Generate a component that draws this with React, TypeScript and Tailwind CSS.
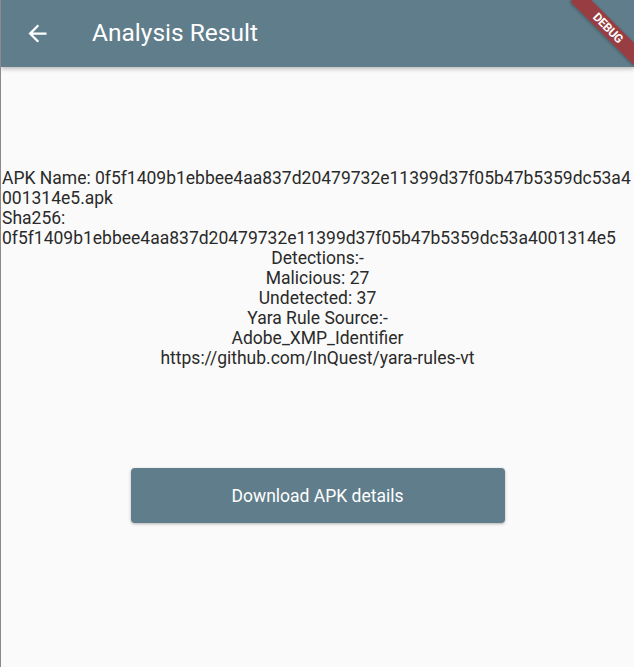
const BACK_PATH = "M20 11H7.83l5.59-5.59L12 4l-8 8 8 8 1.41-1.41L7.83 13H20v-2z";

export default function App() {
  return (
    <div className="relative h-[667px] w-[634px] overflow-hidden border-l border-[#8a8a8a] bg-[#fafafa] font-['Roboto',sans-serif] text-[#2a2a2a]">
      {/* App bar */}
      <header className="relative z-10 flex h-[67px] items-center bg-[#607d8b] shadow-[0_2px_4px_rgba(0,0,0,0.25)]">
        <div className="flex w-[91px] justify-start pl-[23px]">
          <svg viewBox="0 0 24 24" className="h-[27px] w-[27px] fill-white">
            <path d={BACK_PATH} />
          </svg>
        </div>
        <h1 className="text-[24.5px] font-normal leading-none text-white">Analysis Result</h1>
      </header>

      {/* Body */}
      <main className="flex flex-col pt-[101px] text-[17.5px] leading-[20px]">
        <p className="break-all pl-px">
          APK Name: 0f5f1409b1ebbee4aa837d20479732e11399d37f05b47b5359dc53a4001314e5.apk
        </p>
        <p className="pl-px">Sha256:</p>
        <p className="pl-px">0f5f1409b1ebbee4aa837d20479732e11399d37f05b47b5359dc53a4001314e5</p>
        <div className="flex flex-col items-center text-center">
          <p>Detections:-</p>
          <p>Malicious: 27</p>
          <p>Undetected: 37</p>
          <p>Yara Rule Source:-</p>
          <p>Adobe_XMP_Identifier</p>
          <p>https://github.com/InQuest/yara-rules-vt</p>
        </div>
        <div className="flex justify-center pt-[100px]">
          <button
            type="button"
            className="h-[55px] w-[374px] rounded-[4px] bg-[#607d8b] text-[17.5px] text-white shadow-[0_1px_3px_rgba(0,0,0,0.3)]"
          >
            Download APK details
          </button>
        </div>
      </main>

      {/* Debug banner */}
      <div className="absolute left-[562px] top-[20px] z-20 flex h-[16px] w-[90px] rotate-45 items-center justify-center bg-[#b71c1c]/[0.65] shadow-[0_1px_3px_rgba(0,0,0,0.3)]">
        <span className="text-[12px] font-bold leading-none tracking-tight text-white">DEBUG</span>
      </div>
    </div>
  );
}
